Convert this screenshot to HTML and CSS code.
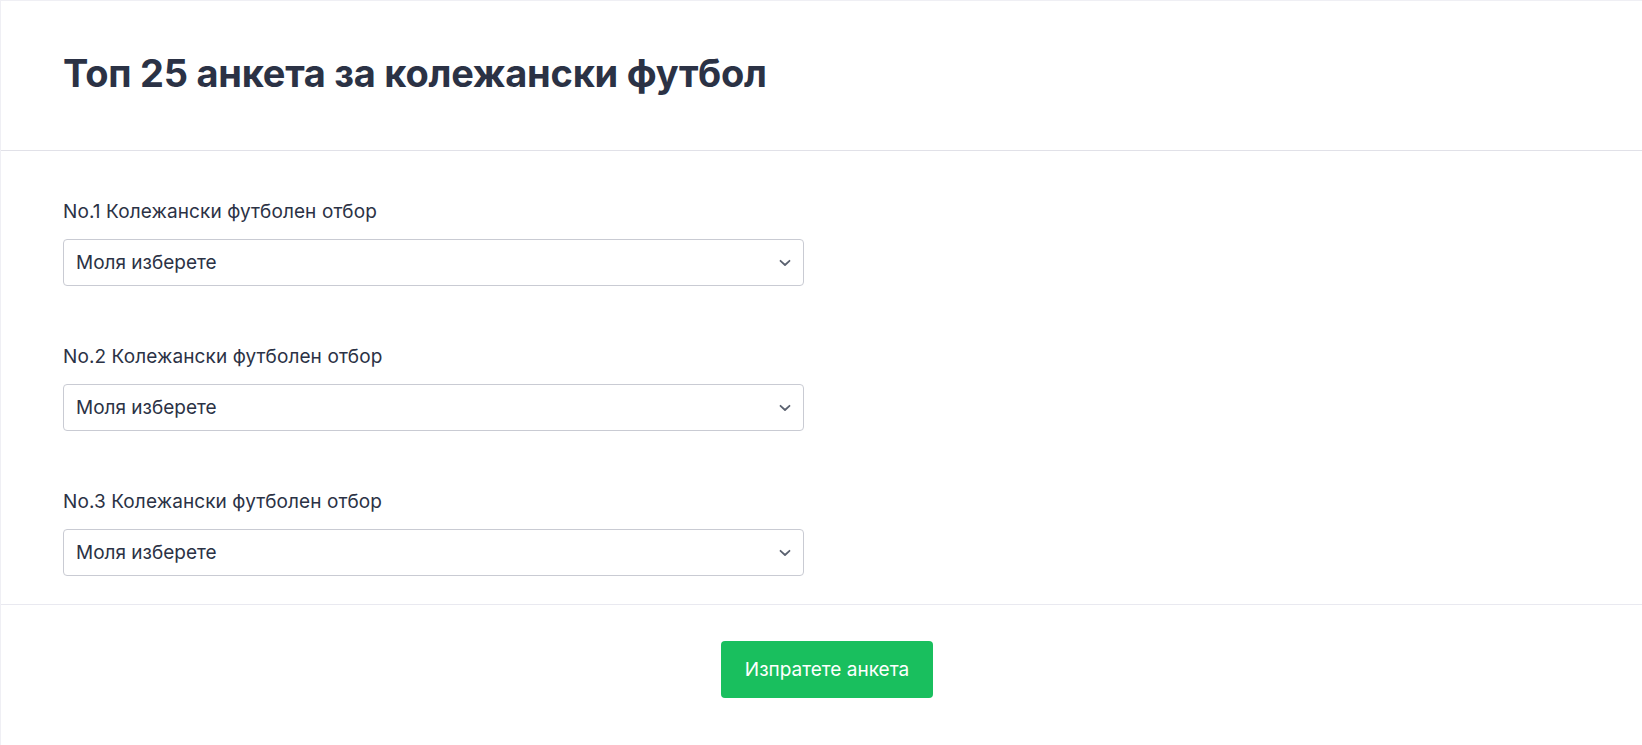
FILE: index.html
```html
<!DOCTYPE html>
<html lang="bg">
<head>
<meta charset="utf-8">
<title>Топ 25 анкета за колежански футбол</title>
<link rel="stylesheet" href="styles.css">
</head>
<body>
<div class="card">
  <header class="card-header">
    <h1 class="title">Топ 25 анкета за колежански футбол</h1>
  </header>
  <form class="card-body">
    <div class="field">
      <label class="label" for="s1">No.1 Колежански футболен отбор</label>
      <div class="select-wrap">
        <select id="s1" class="select"><option>Моля изберете</option></select>
        <svg class="chevron" width="12" height="8" viewBox="0 0 12 8"><path d="M1.5 1.8 L6 6 L10.5 1.8" fill="none" stroke="#5b6270" stroke-width="1.8" stroke-linecap="round" stroke-linejoin="round"/></svg>
      </div>
    </div>
    <div class="field">
      <label class="label" for="s2">No.2 Колежански футболен отбор</label>
      <div class="select-wrap">
        <select id="s2" class="select"><option>Моля изберете</option></select>
        <svg class="chevron" width="12" height="8" viewBox="0 0 12 8"><path d="M1.5 1.8 L6 6 L10.5 1.8" fill="none" stroke="#5b6270" stroke-width="1.8" stroke-linecap="round" stroke-linejoin="round"/></svg>
      </div>
    </div>
    <div class="field">
      <label class="label" for="s3">No.3 Колежански футболен отбор</label>
      <div class="select-wrap">
        <select id="s3" class="select"><option>Моля изберете</option></select>
        <svg class="chevron" width="12" height="8" viewBox="0 0 12 8"><path d="M1.5 1.8 L6 6 L10.5 1.8" fill="none" stroke="#5b6270" stroke-width="1.8" stroke-linecap="round" stroke-linejoin="round"/></svg>
      </div>
    </div>
  </form>
  <footer class="card-footer">
    <button class="btn" type="button">Изпратете анкета</button>
  </footer>
</div>
</body>
</html>
```

FILE: styles.css
```css
* { box-sizing: border-box; }
html, body { margin: 0; padding: 0; background: #fff; }
body {
  font-family: Inter, "Noto Sans", "Liberation Sans", sans-serif;
  color: #2b3245;
}
.card {
  border-top: 1px solid #efeff4;
  border-left: 1px solid #efeff4;
  min-height: 745px;
}
.card-header {
  padding: 48px 62px 0;
  height: 150px;
  border-bottom: 1px solid #e1e1e8;
}
.title {
  margin: 0;
  font-size: 38px;
  line-height: 48px;
  font-weight: 700;
  letter-spacing: -0.25px;
  color: #2b3245;
}
.card-body {
  padding: 48px 62px 28px;
  border-bottom: 1px solid #e9e9f0;
}
.field { margin-bottom: 58px; }
.field:last-child { margin-bottom: 0; }
.label {
  display: block;
  font-size: 19px;
  line-height: 26px;
  margin-bottom: 14px;
  letter-spacing: 0.1px;
  color: #2b3245;
}
.select-wrap {
  position: relative;
  width: 741px;
}
.select {
  appearance: none;
  -webkit-appearance: none;
  width: 100%;
  height: 47px;
  border: 1px solid #c9cbd3;
  border-radius: 4px;
  background: #fff;
  padding: 0 40px 0 12px;
  font-family: inherit;
  font-size: 19px;
  color: #2b3245;
}
.chevron {
  position: absolute;
  right: 13px;
  top: 20px;
}
.card-footer {
  display: flex;
  justify-content: center;
  padding-top: 36px;
}
.btn {
  height: 57px;
  padding: 0 24px;
  border: none;
  border-radius: 4px;
  background: #19bf5e;
  color: #fff;
  font-family: inherit;
  font-size: 19px;
  margin-left: 11px;
}
```
